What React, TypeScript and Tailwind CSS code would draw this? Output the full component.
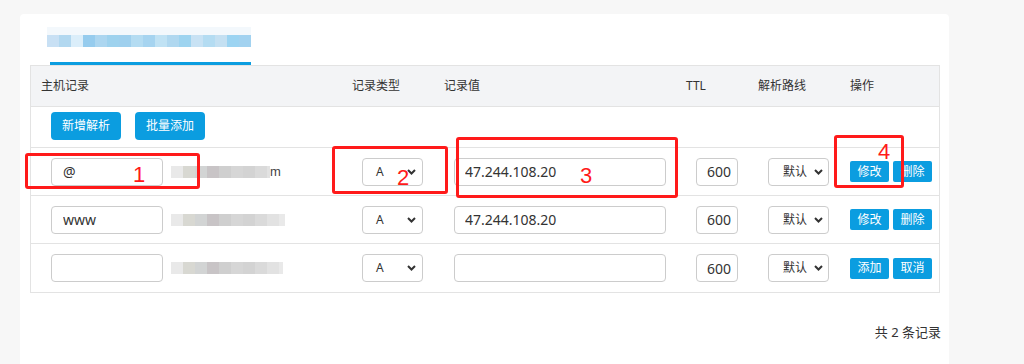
import React from 'react';

const tabBlocks = ['#c8e0f4', '#b2d8f0', '#dbeefa', '#96ccee', '#acd6f0', '#9ed2ee', '#9fd0ee', '#b4dcf2', '#a6d4f0', '#c0e2f4', '#b0d8f0', '#9ed4f0', '#c8e2f4', '#b4dcf2', '#c4e0f2', '#9cd4f2', '#a2d2f0'];
const grayBlocks = ['#e9e9e9', '#d8d8d2', '#d2d4d4', '#c8c4c6', '#cfcfcf', '#d6d6d6', '#d3d3d3', '#dadada', '#e2e2e2', '#e9e9e9'];

const records = [
  { host: '@', value: '47.244.108.20', actions: ['修改', '删除'], tail: 'm', width: 99 },
  { host: 'www', value: '47.244.108.20', actions: ['修改', '删除'], tail: '', width: 114 },
  { host: '', value: '', actions: ['添加', '取消'], tail: '', width: 112 },
];

const cols = ['w-[311px]', 'w-[92px]', 'w-[242px]', 'w-[72px]', 'w-[92px]', 'w-[99px]'];

function Chevron() {
  return (
    <svg width="9" height="6" viewBox="0 0 9 6" className="shrink-0">
      <path d="M1 1 L4.5 4.5 L8 1" fill="none" stroke="#333" strokeWidth="2" />
    </svg>
  );
}

function FakeSelect({ label, className }: { label: string; className: string }) {
  return (
    <div className={`flex h-[28px] items-center justify-between rounded-[4px] border border-[#cccccc] bg-white text-[12px] text-[#333] ${className}`}>
      <span>{label}</span>
      <Chevron />
    </div>
  );
}

function Blurred({ width }: { width: number }) {
  return (
    <div className="flex h-[12px] overflow-hidden blur-[0.6px]" style={{ width }}>
      {grayBlocks.map((c, i) => (
        <span key={i} className="h-full w-[12px] shrink-0" style={{ background: c }} />
      ))}
    </div>
  );
}

function Mark({ box, num, numPos }: { box: string; num: string; numPos: string }) {
  return (
    <>
      <div className={`absolute rounded-[3px] border-[3px] border-[#ff1a1a] ${box}`} />
      <span className={`absolute text-[22px] leading-none text-[#ff1a1a] ${numPos}`} style={{ fontFamily: '"Liberation Sans", sans-serif' }}>{num}</span>
    </>
  );
}

export default function App() {
  return (
    <div className="relative min-h-screen bg-[#f7f7f7] pl-[20px] pt-[14px] text-[#333]" style={{ fontFamily: '"Noto Sans", "Noto Sans CJK SC", sans-serif' }}>
      <div className="h-[360px] w-[929px] rounded-t-[4px] bg-white px-[10px]">
        {/* tab */}
        <div className="flex h-[51px] flex-col pl-[20px]">
          <div className="-ml-[3px] mt-[13px] flex flex-col">
            <div className="h-[8px] w-[204px] bg-[#f3f8fc]" />
            <div className="flex h-[12px]">
              {tabBlocks.map((c, i) => (
                <span key={i} className="h-full w-[12px]" style={{ background: c }} />
              ))}
            </div>
          </div>
          <div className="mt-auto h-[3px] w-[201px] bg-[#0b9de0]" />
        </div>

        {/* table */}
        <div className="w-[910px] border border-[#e3e3e3]">
          <div className="flex h-[41px] items-center border-b border-[#e3e3e3] bg-[#f3f4f6] text-[12px]">
            {['主机记录', '记录类型', '记录值', 'TTL', '解析路线', '操作'].map((h, i) => (
              <div key={h} className={`${cols[i]} pl-[10px]`}>{h}</div>
            ))}
          </div>
          <div className="flex h-[41px] gap-[14px] border-b border-[#e3e3e3] pl-[20px] pt-[5px]">
            {['新增解析', '批量添加'].map((b) => (
              <button key={b} className="h-[28px] w-[70px] rounded-[4px] bg-[#0b9de0] text-[12px] text-white">{b}</button>
            ))}
          </div>
          {records.map((r, idx) => (
            <div key={idx} className={`flex h-[48px] items-center ${idx < 2 ? 'border-b border-[#e3e3e3]' : ''}`}>
              <div className={`${cols[0]} flex items-center gap-[8px] pl-[20px]`}>
                <input readOnly value={r.host} className="h-[28px] w-[112px] rounded-[4px] border border-[#cccccc] px-[11px] text-[14px] text-[#333] outline-none" />
                <div className="flex items-center">
                  <Blurred width={r.width} />
                  {r.tail && <span className="text-[13px] leading-none text-[#444]" style={{ fontFamily: '"Liberation Sans", sans-serif' }}>{r.tail}</span>}
                </div>
              </div>
              <div className={`${cols[1]} pl-[20px]`}>
                <FakeSelect label="A" className="w-[61px] pl-[13px] pr-[6px]" />
              </div>
              <div className={`${cols[2]} pl-[20px]`}>
                <input readOnly value={r.value} className="h-[28px] w-[212px] rounded-[4px] border border-[#cccccc] px-[10px] text-[14px] text-[#333] outline-none" />
              </div>
              <div className={`${cols[3]} pl-[20px]`}>
                <input readOnly value="600" className="h-[28px] w-[42px] rounded-[4px] border border-[#cccccc] pl-[10px] text-[14px] text-[#333] outline-none" />
              </div>
              <div className={`${cols[4]} pl-[20px]`}>
                <FakeSelect label="默认" className="w-[61px] pl-[14px] pr-[5px]" />
              </div>
              <div className={`${cols[5]} flex gap-[4px] pl-[10px]`}>
                {r.actions.map((a) => (
                  <button key={a} className="h-[21px] w-[39px] rounded-[2px] bg-[#0b9de0] text-[12px] leading-none text-white">{a}</button>
                ))}
              </div>
            </div>
          ))}
        </div>

        <div className="mt-[30px] w-[911px] text-right text-[13px] text-[#333]">共 2 条记录</div>
      </div>

      {/* annotations */}
      <Mark box="left-[25px] top-[153px] h-[36px] w-[175px]" num="1" numPos="left-[133px] top-[164px]" />
      <Mark box="left-[332px] top-[146px] h-[48px] w-[116px]" num="2" numPos="left-[397px] top-[167px]" />
      <Mark box="left-[456px] top-[137px] h-[61px] w-[222px]" num="3" numPos="left-[580px] top-[165px]" />
      <Mark box="left-[834px] top-[135px] h-[53px] w-[70px]" num="4" numPos="left-[878px] top-[141px]" />
    </div>
  );
}
